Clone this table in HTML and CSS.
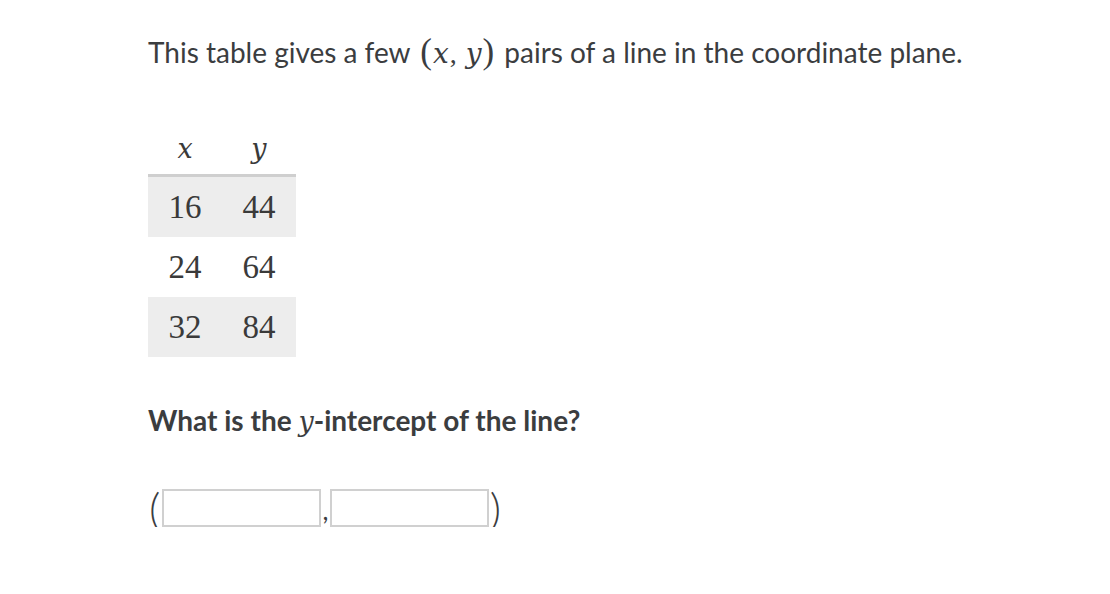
FILE: index.html
```html
<!DOCTYPE html>
<html>
<head>
<meta charset="utf-8">
<link rel="stylesheet" href="styles.css">
</head>
<body>
<div class="page">
  <p class="lead">This table gives a few <span class="math"><span class="paren">(</span><i>x</i><span class="sep">,</span><i>y</i><span class="paren">)</span></span> pairs of a line in the coordinate plane.</p>
  <table class="data">
    <thead>
      <tr><th><i>x</i></th><th><i>y</i></th></tr>
    </thead>
    <tbody>
      <tr class="shade"><td>16</td><td>44</td></tr>
      <tr><td>24</td><td>64</td></tr>
      <tr class="shade"><td>32</td><td>84</td></tr>
    </tbody>
  </table>
  <p class="question">What is the <i class="mi">y</i>-intercept of the line?</p>
  <div class="answer">
    <span class="bracket">(</span>
    <input class="box" type="text">
    <span class="comma">,</span>
    <input class="box" type="text">
    <span class="bracket">)</span>
  </div>
</div>
</body>
</html>
```

FILE: styles.css
```css
html, body {
  margin: 0;
  padding: 0;
  background: #ffffff;
}
.page {
  padding: 30px 0 0 148px;
  font-family: Lato, "Noto Sans", sans-serif;
  color: #3b3d3f;
}
.lead {
  margin: 0;
  font-size: 28px;
  line-height: 44px;
}
.math {
  font-family: "Liberation Serif", serif;
  font-size: 28px;
  padding: 0 3px;
}
.math i, .mi {
  font-family: "DejaVu Serif", "Liberation Serif", serif;
  font-style: italic;
  font-size: 28px;
}
.math i {
  margin: 0 1px;
}
.math .sep {
  margin-right: 8px;
}
.paren {
  font-family: "Liberation Serif", serif;
  font-size: 35px;
}
.data {
  margin-top: 45px;
  border-collapse: collapse;
  font-family: "Liberation Serif", "DejaVu Serif", serif;
  font-size: 33px;
  color: #3a3a3a;
}
.data th {
  width: 74px;
  height: 53px;
  padding: 0;
  font-weight: normal;
  border-bottom: 3px solid #cfcfcf;
}
.data th i {
  font-family: "DejaVu Serif", serif;
  font-size: 27px;
}
.data td {
  width: 74px;
  height: 60px;
  padding: 0;
  text-align: center;
}
.data tr.shade td {
  background: #ededed;
}
.question {
  margin: 41px 0 0 0;
  font-size: 28px;
  font-weight: bold;
  line-height: 44px;
}
.question .mi {
  font-weight: normal;
  font-size: 27px;
}
.answer {
  margin-top: 45px;
  display: flex;
  align-items: center;
  height: 38px;
}
.bracket {
  width: 13px;
  font-family: Lato, sans-serif;
  font-size: 44px;
  font-weight: 300;
  line-height: 38px;
  color: #3b3d3f;
  text-align: center;
}
.bracket:first-child {
  text-align: left;
  margin-left: 1px;
}
.box {
  box-sizing: border-box;
  width: 159px;
  height: 38px;
  margin: 0;
  border: 2px solid #d0d0d0;
  background: #fff;
  padding: 0;
}
.comma {
  font-size: 26px;
  align-self: flex-end;
  width: 9px;
  text-align: center;
  line-height: 34px;
}
```
